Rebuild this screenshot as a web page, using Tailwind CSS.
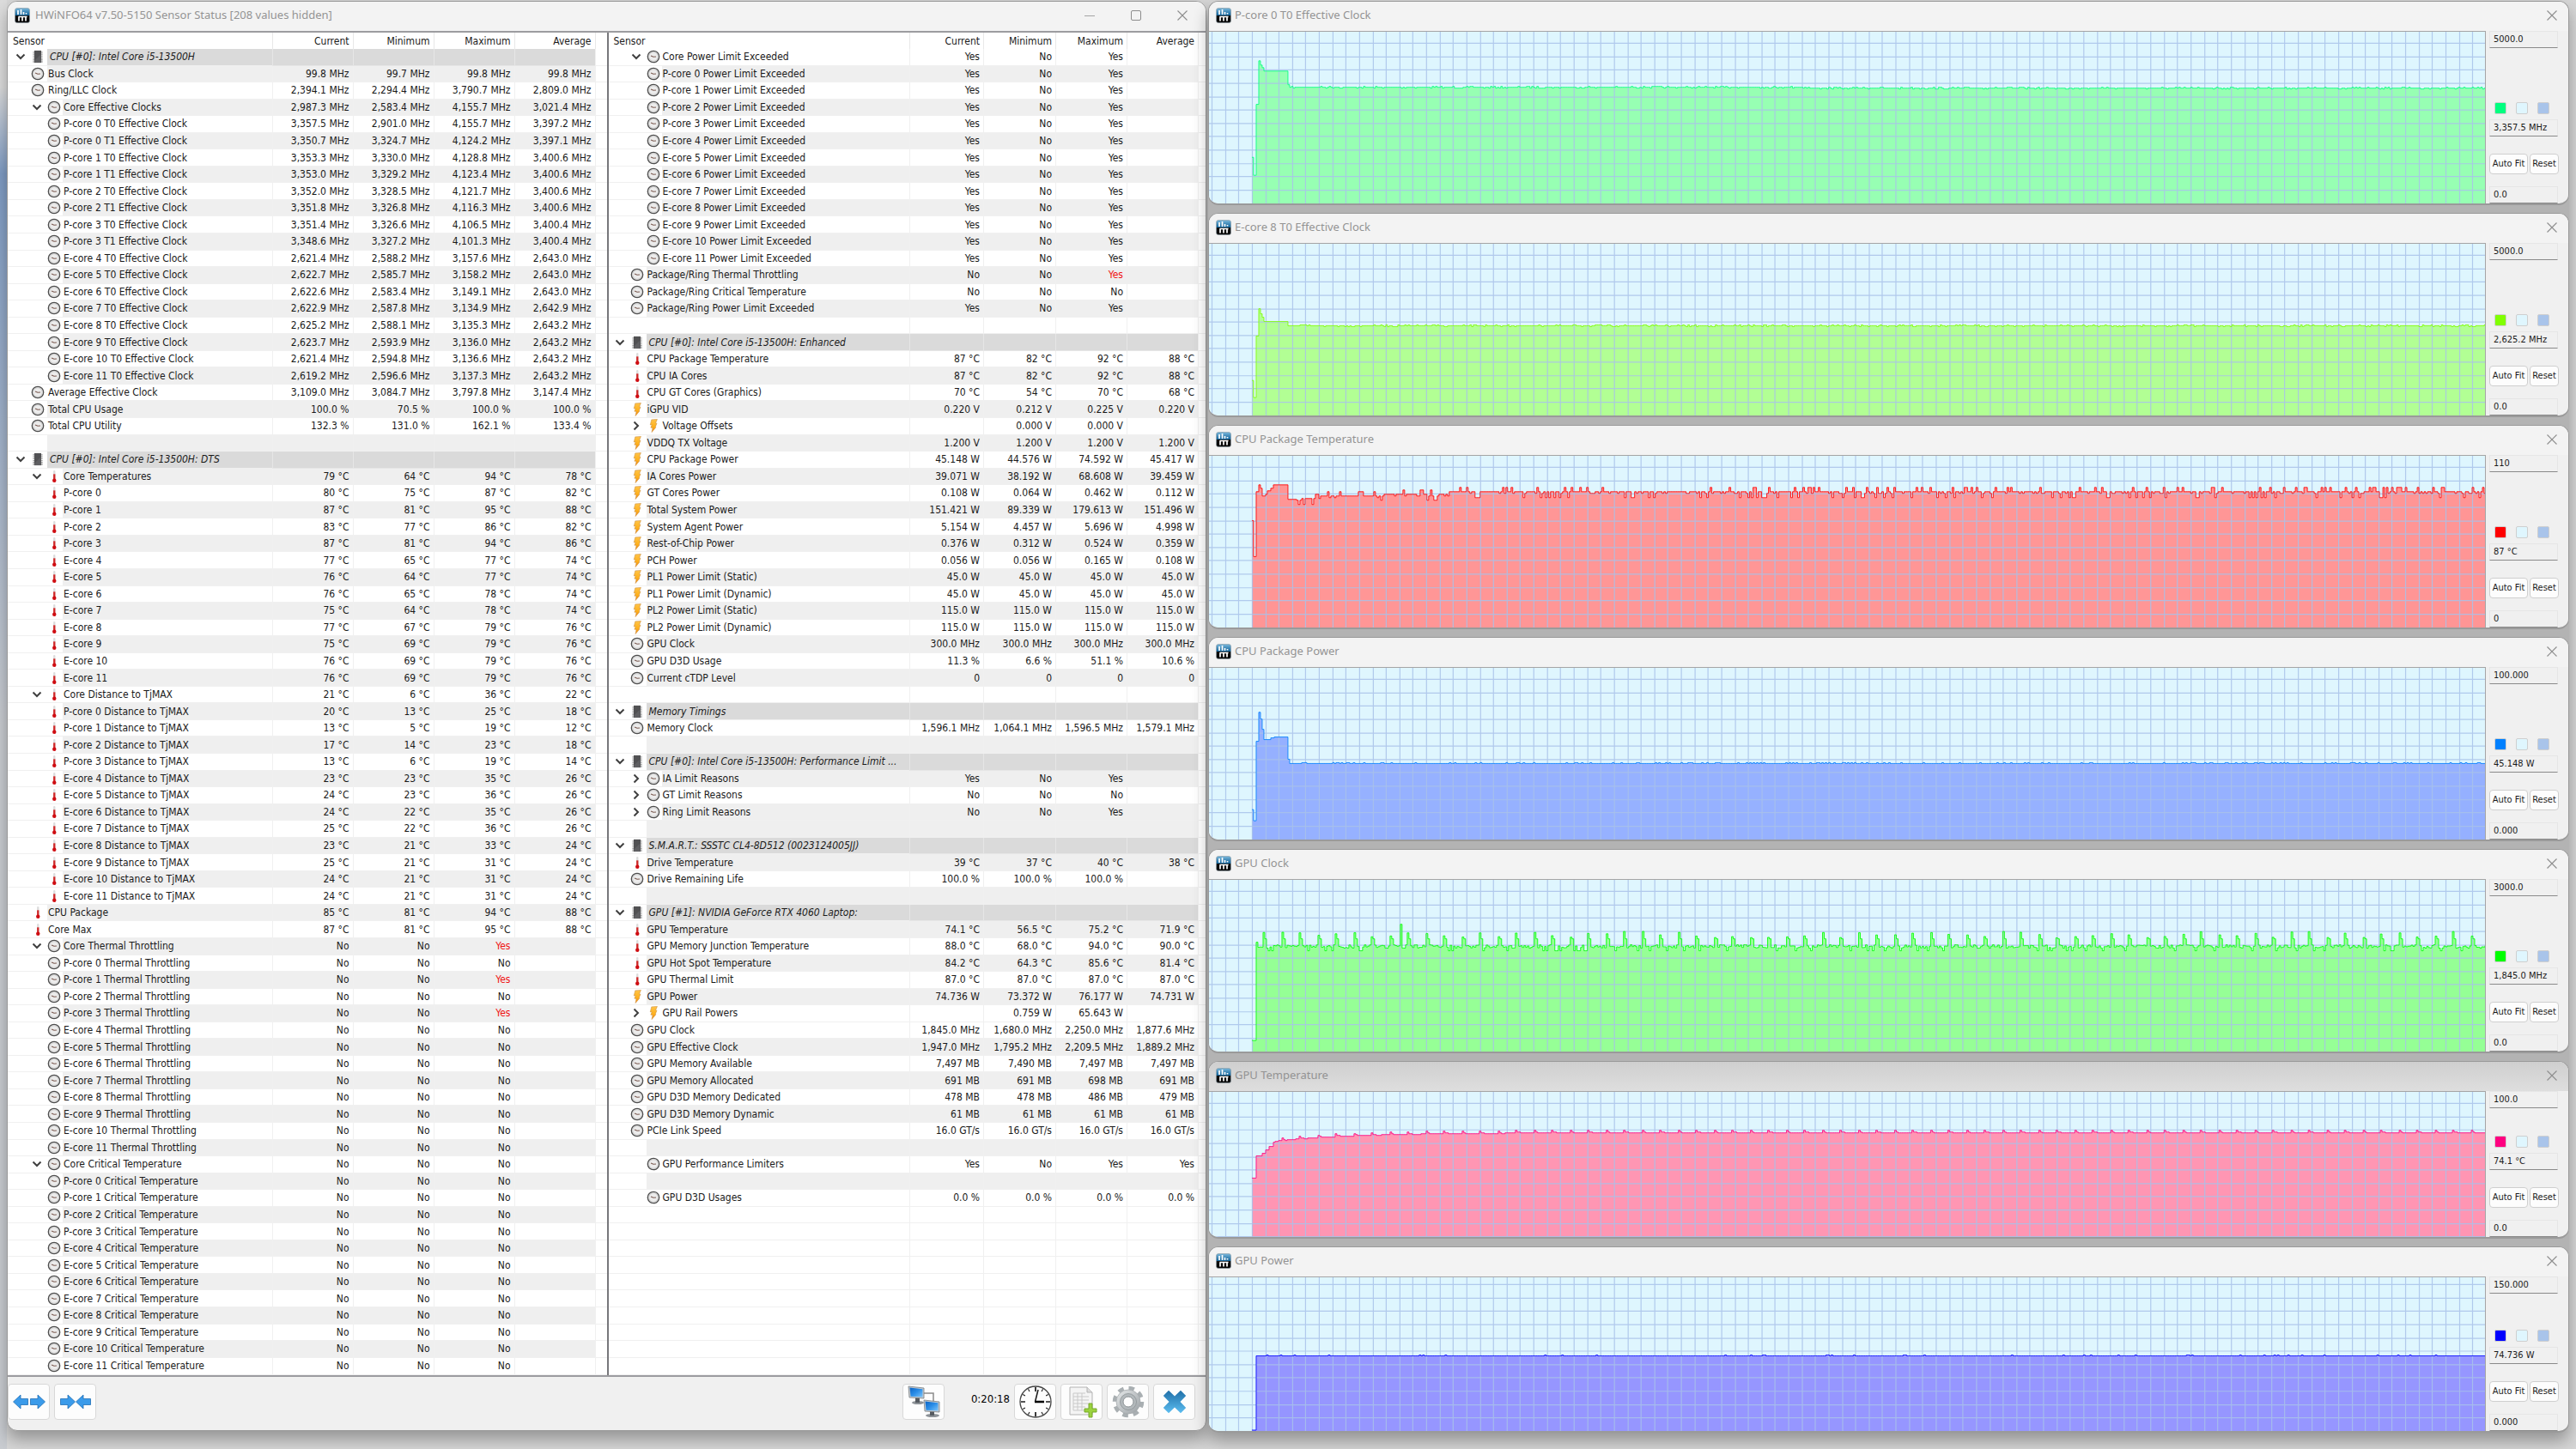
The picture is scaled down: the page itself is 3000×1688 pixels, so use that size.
<!DOCTYPE html>
<html lang="en">
<head>
  <meta charset="UTF-8" />
  <meta name="viewport" content="width=device-width, initial-scale=1.0"/>
  <title>HWiNFO64 Sensor Status</title>
  <script src="https://cdn.jsdelivr.net/npm/@tailwindcss/browser@4"></script>
</head>
<body class="min-h-screen bg-[#d6d6d6] font-['DejaVu_Sans_Condensed','DejaVu_Sans',sans-serif] text-[11px] text-[#1a1a1a] overflow-x-hidden">

  <!-- shared icons -->
  <svg class="absolute h-0 w-0" aria-hidden="true">
    <defs>
      <linearGradient id="gLogo" x1="0" y1="0" x2="0" y2="1"><stop offset="0" stop-color="#7ab8dc"/><stop offset=".5" stop-color="#0c5f97"/><stop offset=".5" stop-color="#111"/><stop offset="1" stop-color="#000"/></linearGradient>
      <linearGradient id="gBolt" x1="0" y1="0" x2="0" y2="1"><stop offset="0" stop-color="#ffc44a"/><stop offset=".55" stop-color="#ffb21e"/><stop offset="1" stop-color="#f58a12"/></linearGradient>
      <linearGradient id="gScreen" x1="0" y1="0" x2="1" y2="1"><stop offset="0" stop-color="#0b63c4"/><stop offset=".5" stop-color="#2b8ee8"/><stop offset="1" stop-color="#7cc4fa"/></linearGradient>
      <linearGradient id="gCross" x1="0" y1="0" x2="0" y2="1"><stop offset="0" stop-color="#1f6fa8"/><stop offset="1" stop-color="#5cbdf0"/></linearGradient>
      <linearGradient id="gGear" x1="0" y1="0" x2="1" y2="1"><stop offset="0" stop-color="#e6e9ea"/><stop offset="1" stop-color="#9aa0a4"/></linearGradient>
    </defs>
    <symbol id="icon-logo" viewBox="0 0 18 18">
      <rect x=".5" y=".5" width="17" height="17" rx="2.5" fill="url(#gLogo)" stroke="#8b9aa3" stroke-width=".6"/>
      <path d="M4 3v5M7.500 2v6M10.500 5v3M13.500 6v1.500M4.500 10.500h10M5 10.500v5M9 10.500v5M13 10.500v5" stroke="#fff" stroke-width="1.700" fill="none"/>
    </symbol>
    <symbol id="icon-clock" viewBox="0 0 16 16">
      <circle cx="8" cy="8" r="6.700" fill="#ececec" stroke="#4d4d4d" stroke-width="1.300"/>
      <circle cx="8" cy="8" r="5.300" fill="none" stroke="#c4c4c4" stroke-width=".8"/>
      <path d="M5 7l3 1.300 3-.3" stroke="#7b5a50" stroke-width="1.100" fill="none"/>
    </symbol>
    <symbol id="icon-therm" viewBox="0 0 16 18">
      <rect x="7" y="1" width="2.600" height="12" rx="1.300" fill="#dcdcdc"/>
      <rect x="7" y="6" width="2.600" height="8" fill="#cf2a2a"/>
      <circle cx="8.300" cy="14.300" r="2.500" fill="#cf0d12"/>
    </symbol>
    <symbol id="icon-bolt" viewBox="0 0 16 18">
      <path d="M5.500 1L13 .5 10.800 5.500 12.500 5.800 10.500 10.500 11.300 11 5.800 17.500 7 11.500 4.500 11.500 6 7.500 3.800 7.800z" fill="url(#gBolt)" stroke="#c98a3a" stroke-width=".6"/>
    </symbol>
    <symbol id="icon-chip" viewBox="0 0 16 18">
      <path d="M2.500 2.500v14M13.500 2.500v14" stroke="#8a8a8a" stroke-width="1.500" stroke-dasharray="1.500 1"/>
      <rect x="3.500" y="1" width="9" height="16" fill="#515153"/>
      <path d="M4 14l8-8v11H4z" fill="#5f5f62"/>
    </symbol>
    <symbol id="icon-down" viewBox="0 0 12 12"><path d="M1.500 3.500L6 8l4.500-4.500" fill="none" stroke="#404040" stroke-width="2"/></symbol>
    <symbol id="icon-right" viewBox="0 0 12 12"><path d="M3.500 1.500L8 6l-4.500 4.500" fill="none" stroke="#404040" stroke-width="2"/></symbol>
    <symbol id="icon-close" viewBox="0 0 12 12"><path d="M.5 .5l11 11M11.500 .5l-11 11" stroke="#8d8d8d" stroke-width="1.100"/></symbol>
  </svg>

  <div class="flex min-h-screen">
    <!-- desktop behind the windows -->
    <div class="w-2 shrink-0 bg-linear-to-b from-[#dcdcdc] from-6% via-[#7f9cc4] via-12% to-[#c9ccd1] to-50%"></div>

    <div class="grid flex-1 grid-cols-[1399fr_1593fr] items-start pt-px">

      <!-- sensor window -->
      <main class="mr-[2px] rounded-xl border border-[#9a9a9a] bg-[#f0f0f0] overflow-hidden shadow-[0_10px_18px_rgba(0,0,0,0.3)]">
        <header class="flex h-[34px] items-center bg-[#f3f3f3] pb-[2px] pl-2">
          <svg class="h-[18px] w-[18px]"><use href="#icon-logo"/></svg>
          <h1 class="flex-1 pl-[6px] font-['Noto_Sans',sans-serif] text-[13px] text-[#939393]">HWiNFO64 v7.50-5150 Sensor Status [208 values hidden]</h1>
          <button aria-label="Minimize" class="flex w-[54px] justify-center"><span class="h-px w-3 bg-[#a5a5a5]"></span></button>
          <button aria-label="Maximize" class="flex w-[54px] justify-center"><span class="h-3 w-3 rounded-xs border border-[#8d8d8d]"></span></button>
          <button aria-label="Close" class="flex w-[54px] justify-center"><svg class="h-3 w-3"><use href="#icon-close"/></svg></button>
        </header>

        <div class="grid grid-cols-2 border-y-2 border-[#9c9ca0] bg-white text-[12px]">
          <table id="sensors-left" class="h-[1564px] w-full table-fixed border-separate border-spacing-0 leading-[16px]">
            <colgroup>
              <col class="w-[27px]"/><col class="w-[19px]"/><col class="w-[18px]"/><col/>
              <col class="w-[94px]"/><col class="w-[94px]"/><col class="w-[94px]"/><col class="w-[94px]"/><col class="w-[14px]"/>
            </colgroup>
          </table>
          <table id="sensors-right" class="h-[1564px] w-full table-fixed border-separate border-spacing-0 border-l-2 border-[#77777b] leading-[16px]">
            <colgroup>
              <col class="w-[25px]"/><col class="w-[19px]"/><col class="w-[18px]"/><col/>
              <col class="w-[86px]"/><col class="w-[84px]"/><col class="w-[83px]"/><col class="w-[83px]"/><col class="w-[9px]"/>
            </colgroup>
          </table>
        </div>

        <footer class="flex h-[62px] items-center gap-[5px] pb-[5px]">
          <button aria-label="Expand columns" class="flex h-[42px] w-[49px] items-center justify-center rounded-sm border border-[#d8d8d8] bg-[#fdfdfd]">
            <svg class="h-5 w-10" viewBox="0 0 40 20" fill="#3b9bea" stroke="#1f6fb5" stroke-width=".8"><path d="M1.500 10L10 2v4.500h8.500v7H10V18zM38.500 10L30 2v4.500h-8.500v7H30V18z"/></svg>
          </button>
          <button aria-label="Shrink columns" class="flex h-[42px] w-[49px] items-center justify-center rounded-sm border border-[#d8d8d8] bg-[#fdfdfd]">
            <svg class="h-5 w-10" viewBox="0 0 40 20" fill="#3b9bea" stroke="#1f6fb5" stroke-width=".8"><path d="M19.500 10L11 2v4.500H2.500v7H11V18zM20.500 10L29 2v4.500h8.500v7H29V18z"/></svg>
          </button>
          <div class="flex-1"></div>
          <button aria-label="Remote monitoring" class="flex h-[42px] w-[49px] items-center justify-center rounded-sm border border-[#d8d8d8] bg-[#fdfdfd]">
            <svg class="h-[38px] w-[40px]" viewBox="0 0 40 38">
              <path d="M20 9h11v10" fill="none" stroke="#8a8a8a" stroke-width="1.500"/>
              <ellipse cx="13" cy="20" rx="7" ry="2" fill="#8d9297"/><path d="M10 14h5v6h-5z" fill="#555a60"/>
              <path d="M2 1l18 2v12L3 14z" fill="#c8cdd2" stroke="#777d83" stroke-width=".8"/><path d="M3.500 2.500l15 1.700v9.300l-14-.8z" fill="url(#gScreen)"/>
              <ellipse cx="30" cy="35" rx="8" ry="2" fill="#8d9297"/><path d="M27 30h5v5h-5z" fill="#555a60"/>
              <path d="M20 17l18 2v12l-17-1z" fill="#c8cdd2" stroke="#777d83" stroke-width=".8"/><path d="M21.500 18.500l15 1.700v9.300l-14-.8z" fill="url(#gScreen)"/>
            </svg>
          </button>
          <time class="w-[71px] pb-[5px] text-right text-[13px] text-black">0:20:18</time>
          <button aria-label="Reset time" class="flex h-[42px] w-[49px] items-center justify-center rounded-sm border border-[#d8d8d8] bg-[#fdfdfd]">
            <svg class="h-[38px] w-[38px]" viewBox="0 0 38 38" fill="none" stroke="#1b1b1b">
              <circle cx="19" cy="19" r="18" stroke="#444" stroke-width="1.300"/>
              <path d="M19 2v5M19 31v5M2 19h5M31 19h5" stroke-width="1.700"/>
              <path d="M10.500 4.300l1.500 2.600M27.500 4.300L26 6.900M4.300 10.500l2.600 1.500M33.700 10.500l-2.600 1.500M4.300 27.500l2.600-1.500M33.700 27.500l-2.600-1.500M10.500 33.700l1.500-2.600M27.500 33.700L26 31.100" stroke-width="1.100"/>
              <path d="M18.500 19L22 5" stroke-width="1.500"/><path d="M18 19h11" stroke="#000" stroke-width="2.500"/>
            </svg>
          </button>
          <button aria-label="Log to file" class="flex h-[42px] w-[49px] items-center justify-center rounded-sm border border-[#d8d8d8] bg-[#fdfdfd]">
            <svg class="h-[38px] w-[36px]" viewBox="0 0 36 38">
              <path d="M4 2h20l6 6v26H4z" fill="#f4f4f4" stroke="#b3b3b3"/><path d="M24 2v6h6" fill="#ddd" stroke="#b3b3b3"/>
              <path d="M8 9h14M8 13h18M8 17h18M8 21h18M8 25h14M8 29h14M8 9v20M13 9v20M18 9v20" stroke="#c9c9c9" fill="none"/>
              <path d="M26 21h4v6h5v4h-5v6h-4v-6h-5v-4h5z" fill="#9bd23f" stroke="#76a82a"/>
            </svg>
          </button>
          <button aria-label="Settings" class="flex h-[42px] w-[49px] items-center justify-center rounded-sm border border-[#d8d8d8] bg-[#fdfdfd]">
            <svg class="h-[38px] w-[38px]" viewBox="0 0 38 38">
              <circle cx="19" cy="19" r="16" fill="none" stroke="#a9afb2" stroke-width="4.500" stroke-dasharray="6.570 6"/>
              <circle cx="19" cy="19" r="14" fill="url(#gGear)" stroke="#a0a5a8" stroke-width=".7"/>
              <circle cx="19" cy="19" r="9.500" fill="#b3b9bc" stroke="#8d9396" stroke-width=".8"/>
              <circle cx="19" cy="19" r="6" fill="#fdfdfd" stroke="#8d9396"/>
            </svg>
          </button>
          <button aria-label="Close sensors" class="mr-3 flex h-[42px] w-[49px] items-center justify-center rounded-sm border border-[#d8d8d8] bg-[#fdfdfd]">
            <svg class="h-7 w-7" viewBox="0 0 28 28"><path d="M7 .8L14 7.500 21 .8 27.200 7 20.500 14 27.200 21 21 27.200 14 20.500 7 27.200 .8 21 7.500 14 .8 7z" fill="url(#gCross)"/></svg>
          </button>
        </footer>
      </main>

      <!-- graph windows -->
      <div id="graphs" class="mr-2 flex flex-col gap-[9px] rounded-xl bg-[#b3b3b3] shadow-[0_10px_18px_rgba(0,0,0,0.3)]"></div>
    </div>
  </div>

  <script>
    // type, label, current, minimum, maximum, average
    // type: h = group, c = clock, t = temperature, b = power; 2 = nested, + = collapsed, - = expanded
    const cores = ["P-core 0", "P-core 1", "P-core 2", "P-core 3", "E-core 4", "E-core 5", "E-core 6", "E-core 7", "E-core 8", "E-core 9", "E-core 10", "E-core 11"];
    const leftRows = `h-|CPU [#0]: Intel Core i5-13500H
c|Bus Clock|99.8 MHz|99.7 MHz|99.8 MHz|99.8 MHz
c|Ring/LLC Clock|2,394.1 MHz|2,294.4 MHz|3,790.7 MHz|2,809.0 MHz
c2-|Core Effective Clocks|2,987.3 MHz|2,583.4 MHz|4,155.7 MHz|3,021.4 MHz
c2|P-core 0 T0 Effective Clock|3,357.5 MHz|2,901.0 MHz|4,155.7 MHz|3,397.2 MHz
c2|P-core 0 T1 Effective Clock|3,350.7 MHz|3,324.7 MHz|4,124.2 MHz|3,397.1 MHz
c2|P-core 1 T0 Effective Clock|3,353.3 MHz|3,330.0 MHz|4,128.8 MHz|3,400.6 MHz
c2|P-core 1 T1 Effective Clock|3,353.0 MHz|3,329.2 MHz|4,123.4 MHz|3,400.6 MHz
c2|P-core 2 T0 Effective Clock|3,352.0 MHz|3,328.5 MHz|4,121.7 MHz|3,400.6 MHz
c2|P-core 2 T1 Effective Clock|3,351.8 MHz|3,326.8 MHz|4,116.3 MHz|3,400.6 MHz
c2|P-core 3 T0 Effective Clock|3,351.4 MHz|3,326.6 MHz|4,106.5 MHz|3,400.4 MHz
c2|P-core 3 T1 Effective Clock|3,348.6 MHz|3,327.2 MHz|4,101.3 MHz|3,400.4 MHz
c2|E-core 4 T0 Effective Clock|2,621.4 MHz|2,588.2 MHz|3,157.6 MHz|2,643.0 MHz
c2|E-core 5 T0 Effective Clock|2,622.7 MHz|2,585.7 MHz|3,158.2 MHz|2,643.0 MHz
c2|E-core 6 T0 Effective Clock|2,622.6 MHz|2,583.4 MHz|3,149.1 MHz|2,643.0 MHz
c2|E-core 7 T0 Effective Clock|2,622.9 MHz|2,587.8 MHz|3,134.9 MHz|2,642.9 MHz
c2|E-core 8 T0 Effective Clock|2,625.2 MHz|2,588.1 MHz|3,135.3 MHz|2,643.2 MHz
c2|E-core 9 T0 Effective Clock|2,623.7 MHz|2,593.9 MHz|3,136.0 MHz|2,643.2 MHz
c2|E-core 10 T0 Effective Clock|2,621.4 MHz|2,594.8 MHz|3,136.6 MHz|2,643.2 MHz
c2|E-core 11 T0 Effective Clock|2,619.2 MHz|2,596.6 MHz|3,137.3 MHz|2,643.2 MHz
c|Average Effective Clock|3,109.0 MHz|3,084.7 MHz|3,797.8 MHz|3,147.4 MHz
c|Total CPU Usage|100.0 %|70.5 %|100.0 %|100.0 %
c|Total CPU Utility|132.3 %|131.0 %|162.1 %|133.4 %

h-|CPU [#0]: Intel Core i5-13500H: DTS
t2-|Core Temperatures|79 °C|64 °C|94 °C|78 °C
t2|P-core 0|80 °C|75 °C|87 °C|82 °C
t2|P-core 1|87 °C|81 °C|95 °C|88 °C
t2|P-core 2|83 °C|77 °C|86 °C|82 °C
t2|P-core 3|87 °C|81 °C|94 °C|86 °C
t2|E-core 4|77 °C|65 °C|77 °C|74 °C
t2|E-core 5|76 °C|64 °C|77 °C|74 °C
t2|E-core 6|76 °C|65 °C|78 °C|74 °C
t2|E-core 7|75 °C|64 °C|78 °C|74 °C
t2|E-core 8|77 °C|67 °C|79 °C|76 °C
t2|E-core 9|75 °C|69 °C|79 °C|76 °C
t2|E-core 10|76 °C|69 °C|79 °C|76 °C
t2|E-core 11|76 °C|69 °C|79 °C|76 °C
t2-|Core Distance to TjMAX|21 °C|6 °C|36 °C|22 °C
t2|P-core 0 Distance to TjMAX|20 °C|13 °C|25 °C|18 °C
t2|P-core 1 Distance to TjMAX|13 °C|5 °C|19 °C|12 °C
t2|P-core 2 Distance to TjMAX|17 °C|14 °C|23 °C|18 °C
t2|P-core 3 Distance to TjMAX|13 °C|6 °C|19 °C|14 °C
t2|E-core 4 Distance to TjMAX|23 °C|23 °C|35 °C|26 °C
t2|E-core 5 Distance to TjMAX|24 °C|23 °C|36 °C|26 °C
t2|E-core 6 Distance to TjMAX|24 °C|22 °C|35 °C|26 °C
t2|E-core 7 Distance to TjMAX|25 °C|22 °C|36 °C|26 °C
t2|E-core 8 Distance to TjMAX|23 °C|21 °C|33 °C|24 °C
t2|E-core 9 Distance to TjMAX|25 °C|21 °C|31 °C|24 °C
t2|E-core 10 Distance to TjMAX|24 °C|21 °C|31 °C|24 °C
t2|E-core 11 Distance to TjMAX|24 °C|21 °C|31 °C|24 °C
t|CPU Package|85 °C|81 °C|94 °C|88 °C
t|Core Max|87 °C|81 °C|95 °C|88 °C
c2-|Core Thermal Throttling|No|No|!Yes|
${cores.map((n, i) => `c2|${n} Thermal Throttling|No|No|${i === 1 || i === 3 ? "!Yes" : "No"}|`).join("\n")}
c2-|Core Critical Temperature|No|No|No|
${cores.map(n => `c2|${n} Critical Temperature|No|No|No|`).join("\n")}`.split("\n");

    const rightRows = `c2-|Core Power Limit Exceeded|Yes|No|Yes|
${cores.map(n => `c2|${n} Power Limit Exceeded|Yes|No|Yes|`).join("\n")}
c|Package/Ring Thermal Throttling|No|No|!Yes|
c|Package/Ring Critical Temperature|No|No|No|
c|Package/Ring Power Limit Exceeded|Yes|No|Yes|

h-|CPU [#0]: Intel Core i5-13500H: Enhanced
t|CPU Package Temperature|87 °C|82 °C|92 °C|88 °C
t|CPU IA Cores|87 °C|82 °C|92 °C|88 °C
t|CPU GT Cores (Graphics)|70 °C|54 °C|70 °C|68 °C
b|iGPU VID|0.220 V|0.212 V|0.225 V|0.220 V
b2+|Voltage Offsets||0.000 V|0.000 V|
b|VDDQ TX Voltage|1.200 V|1.200 V|1.200 V|1.200 V
b|CPU Package Power|45.148 W|44.576 W|74.592 W|45.417 W
b|IA Cores Power|39.071 W|38.192 W|68.608 W|39.459 W
b|GT Cores Power|0.108 W|0.064 W|0.462 W|0.112 W
b|Total System Power|151.421 W|89.339 W|179.613 W|151.496 W
b|System Agent Power|5.154 W|4.457 W|5.696 W|4.998 W
b|Rest-of-Chip Power|0.376 W|0.312 W|0.524 W|0.359 W
b|PCH Power|0.056 W|0.056 W|0.165 W|0.108 W
b|PL1 Power Limit (Static)|45.0 W|45.0 W|45.0 W|45.0 W
b|PL1 Power Limit (Dynamic)|45.0 W|45.0 W|45.0 W|45.0 W
b|PL2 Power Limit (Static)|115.0 W|115.0 W|115.0 W|115.0 W
b|PL2 Power Limit (Dynamic)|115.0 W|115.0 W|115.0 W|115.0 W
c|GPU Clock|300.0 MHz|300.0 MHz|300.0 MHz|300.0 MHz
c|GPU D3D Usage|11.3 %|6.6 %|51.1 %|10.6 %
c|Current cTDP Level|0|0|0|0

h-|Memory Timings
c|Memory Clock|1,596.1 MHz|1,064.1 MHz|1,596.5 MHz|1,579.1 MHz

h-|CPU [#0]: Intel Core i5-13500H: Performance Limit ...
c2+|IA Limit Reasons|Yes|No|Yes|
c2+|GT Limit Reasons|No|No|No|
c2+|Ring Limit Reasons|No|No|Yes|

h-|S.M.A.R.T.: SSSTC CL4-8D512 (0023124005JJ)
t|Drive Temperature|39 °C|37 °C|40 °C|38 °C
c|Drive Remaining Life|100.0 %|100.0 %|100.0 %|

h-|GPU [#1]: NVIDIA GeForce RTX 4060 Laptop:
t|GPU Temperature|74.1 °C|56.5 °C|75.2 °C|71.9 °C
t|GPU Memory Junction Temperature|88.0 °C|68.0 °C|94.0 °C|90.0 °C
t|GPU Hot Spot Temperature|84.2 °C|64.3 °C|85.6 °C|81.4 °C
t|GPU Thermal Limit|87.0 °C|87.0 °C|87.0 °C|87.0 °C
b|GPU Power|74.736 W|73.372 W|76.177 W|74.731 W
b2+|GPU Rail Powers||0.759 W|65.643 W|
c|GPU Clock|1,845.0 MHz|1,680.0 MHz|2,250.0 MHz|1,877.6 MHz
c|GPU Effective Clock|1,947.0 MHz|1,795.2 MHz|2,209.5 MHz|1,889.2 MHz
c|GPU Memory Available|7,497 MB|7,490 MB|7,497 MB|7,497 MB
c|GPU Memory Allocated|691 MB|691 MB|698 MB|691 MB
c|GPU D3D Memory Dedicated|478 MB|478 MB|486 MB|479 MB
c|GPU D3D Memory Dynamic|61 MB|61 MB|61 MB|61 MB
c|PCIe Link Speed|16.0 GT/s|16.0 GT/s|16.0 GT/s|16.0 GT/s

c2|GPU Performance Limiters|Yes|No|Yes|Yes

c2|GPU D3D Usages|0.0 %|0.0 %|0.0 %|0.0 %`.split("\n");
    while (rightRows.length < 79) rightRows.push("");

    const icons = { h: "chip", c: "clock", t: "therm", b: "bolt" };
    const line = "border-b border-[#f0f0f0]";

    function renderTable(id, rows, isGray) {
      const head = `<thead><tr class="h-[19px] text-left"><th colspan="4" class="pl-[6px] font-normal">Sensor</th>${
        ["Current", "Minimum", "Maximum", "Average"].map(t => `<th class="border-l border-[#e8e8e8] pr-1 text-right font-normal">${t}</th>`).join("")
      }<td class="border-l border-[#e8e8e8]"></td></tr></thead>`;
      const body = rows.map((row, i) => {
        const [type, label = "", ...vals] = row.split("|");
        const group = type[0] === "h", nested = type.includes("2");
        const bg = group ? "bg-[#dadada]" : isGray(i) ? "bg-[#efefef]" : "";
        const arrow = type.includes("-") ? "down" : type.includes("+") ? "right" : "";
        const use = n => n ? `<svg class="${n === arrow ? "ml-auto mr-[6px] h-3 w-3" : "h-4 w-4"} block"><use href="#icon-${n}"/></svg>` : "";
        return `<tr class="h-[19px]">
          <td colspan="${nested ? 2 : 1}" class="${line}">${use(arrow)}</td>
          <td class="${line}">${use(icons[type[0]])}</td>
          <td colspan="${nested ? 1 : 2}" class="${line} ${bg} ${group ? "pl-[3px] italic" : "pl-px"} whitespace-nowrap">${label}</td>
          ${[0, 1, 2, 3].map(k => {
            const v = vals[k] || "";
            return `<td class="border-b border-l ${group ? "border-[#e6e6e6]" : "border-[#f0f0f0]"} ${bg} pr-1 text-right whitespace-nowrap ${v[0] === "!" ? "text-[#f01414]" : ""}">${v.replace("!", "")}</td>`;
          }).join("")}
          <td class="${line} border-l"></td></tr>`;
      }).join("");
      document.getElementById(id).insertAdjacentHTML("beforeend", head + "<tbody>" + body + "</tbody>");
    }
    // striping skips a beat after collapsed groups
    renderTable("sensors-left", leftRows, i => i % 2 === 1);
    renderTable("sensors-right", rightRows, i => i < 69 && (i >= 46 && i < 58 ? i % 2 === 0 : i % 2 === 1));

    // small repeatable noise source
    let seed = 7;
    const rnd = () => (seed = (seed * 16807) % 2147483647) / 2147483647;

    // lead: [x, y] steps at the start of the log, tail: level after it
    const graphs = [
      { name: "P-core 0 T0 Effective Clock", max: "5000.0", min: "0.0", now: "3,357.5 MHz", color: "#00ff80", fill: "#97ffb3", h: 201, row: 13,
        lead: [[50, 147], [52, 168], [55, 85], [58, 34], [60, 39], [62, 42], [64, 46], [92, 62], [94, 65]], tail: x => (x < 700 ? 65 : 66) + Math.round(rnd() * 1.4 - .7) },
      { name: "E-core 8 T0 Effective Clock", max: "5000.0", min: "0.0", now: "2,625.2 MHz", color: "#80ff00", fill: "#b2ff94", h: 201, row: 13,
        lead: [[50, 160], [52, 180], [55, 108], [58, 76], [60, 82], [62, 86], [64, 91], [92, 96]], tail: () => 96 + Math.round(rnd() * 1.4 - .7) },
      { name: "CPU Package Temperature", max: "110", min: "0", now: "87 °C", color: "#ff0000", fill: "#ff9696", h: 201, row: 13,
        lead: [[50, 76], [52, 118], [55, 42], [58, 34], [60, 38], [62, 47], [66, 45], [68, 41], [72, 38], [75, 34], [92, 51], [102, 52]], tail: x => { const b = x < 130 ? 50 : x < 200 ? 47 : x < 280 ? 45 : 42; const r = rnd(); return r < .14 ? b - 5 : r > .88 ? b + 7 : r > .74 ? b + 2 : b; } },
      { name: "CPU Package Power", max: "100.000", min: "0.000", now: "45.148 W", color: "#0080ff", fill: "#96b1ff", h: 201, row: 13,
        lead: [[50, 166], [52, 179], [55, 86], [58, 52], [60, 60], [62, 72], [64, 84], [72, 82], [76, 81], [92, 107], [94, 112]], tail: () => rnd() > .8 ? 111 : 112 },
      { name: "GPU Clock", max: "3000.0", min: "0.0", now: "1,845.0 MHz", color: "#00ff00", fill: "#96ff96", h: 201, row: 13,
        lead: [[50, 188], [55, 73]], tail: x => x > 222 && x < 225 ? 52 : x % 21 < 2 ? 60 + rnd() * 8 : x % 21 < 4 ? 69 : rnd() < .1 ? 83 : 76 + rnd() * 4 },
      { name: "GPU Temperature", max: "100.0", min: "0.0", now: "74.1 °C", color: "#ff0080", fill: "#ff96b3", h: 170, row: 13, shade: true,
        lead: [[50, 101], [55, 75], [62, 72], [66, 68], [70, 64], [75, 59]], tail: x => Math.round(48 + 10 * Math.exp(-(x - 75) / 90)) - (x % 21 < 2 ? 3 : x % 21 < 5 ? 1 : 0) },
      { name: "GPU Power", max: "150.000", min: "0.000", now: "74.736 W", color: "#0000ff", fill: "#9696ff", h: 180, row: 8,
        lead: [[50, 179], [55, 92]], tail: () => rnd() > .95 ? 91 : 92 },
    ];

    const WIDTH = 1487, PITCH = 15.63;
    function graphSvg(g) {
      let d = `M50 ${g.lead[0][1]}`;
      g.lead.forEach(([x, y]) => d += `H${x}V${y}`);
      let x = g.lead[g.lead.length - 1][0];
      while (x < WIDTH) { x += 2; d += `H${x}V${g.tail(x).toFixed(1)}`; }
      let grid = "";
      for (let gx = 3; gx < WIDTH; gx += PITCH) grid += `M${Math.round(gx) + .5} 0V${g.h}`;
      for (let gy = g.row; gy <= g.h; gy += PITCH) grid += `M0 ${Math.round(gy) + .5}H${WIDTH}`;
      return `<path d="${d}V${g.h + 2}H50z" fill="${g.fill}"/>
        <path d="${grid}" stroke="#a9c2ea" stroke-width="1.200" opacity=".85"/>
        <path d="${d}" fill="none" stroke="${g.color}" stroke-opacity=".85"/>`;
    }

    const heights = { 201: "h-[201px]", 170: "h-[170px]", 180: "h-[180px]" };
    const field = "h-5 w-20 border border-[#e6e6e6] border-b-[#8a8a8a] bg-[#f0f0f0] pb-px pl-1";
    const swatch = "h-[14px] w-[14px] rounded-xs border border-[#cfcfcf]";
    document.getElementById("graphs").innerHTML = graphs.map(g => `
      <section class="overflow-hidden rounded-xl border border-[#9a9a9a] border-b-2 bg-[#f0f0f0]">
        <header class="flex h-[34px] items-center ${g.shade ? "bg-linear-to-b from-[#cfcfcf] to-[#dedede]" : "bg-[#f3f3f3]"} pb-[2px] pl-2 pr-[13px]">
          <svg class="h-[18px] w-[18px]"><use href="#icon-logo"/></svg>
          <h2 class="flex-1 pl-1 font-['Noto_Sans',sans-serif] text-[13px] text-[#939393]">${g.name}</h2>
          <button aria-label="Close"><svg class="h-3 w-3"><use href="#icon-close"/></svg></button>
        </header>
        <div class="flex ${heights[g.h]}">
          <svg class="h-full min-w-0 flex-1 border-t border-r border-[#a5a5a5] bg-[#dff6fe]" viewBox="0 0 ${WIDTH} ${g.h}" preserveAspectRatio="none">${graphSvg(g)}</svg>
          <div class="flex w-24 shrink-0 flex-col pl-1">
            <input aria-label="${g.name} maximum" class="${field}" value="${g.max}"/>
            <div class="mt-auto flex gap-[11px] pl-[6px]">
              <button aria-label="Line color" class="${swatch}" style="background:${g.color}"></button>
              <button aria-label="Background color" class="${swatch} bg-[#dff6fe]"></button>
              <button aria-label="Grid color" class="${swatch} bg-[#a9c4ea]"></button>
            </div>
            <input aria-label="${g.name} current" class="${field} mt-[6px]" value="${g.now}" readonly/>
            <div class="mt-5 flex gap-[2px] whitespace-nowrap">
              <button class="h-6 w-[45px] rounded-sm border border-[#cfcfcf] bg-[#fdfdfd]">Auto Fit</button>
              <button class="h-6 w-[34px] rounded-sm border border-[#cfcfcf] bg-[#fdfdfd]">Reset</button>
            </div>
            <input aria-label="${g.name} minimum" class="${field} mt-[14px]" value="${g.min}"/>
          </div>
        </div>
      </section>`).join("");
  </script>
</body>
</html>
